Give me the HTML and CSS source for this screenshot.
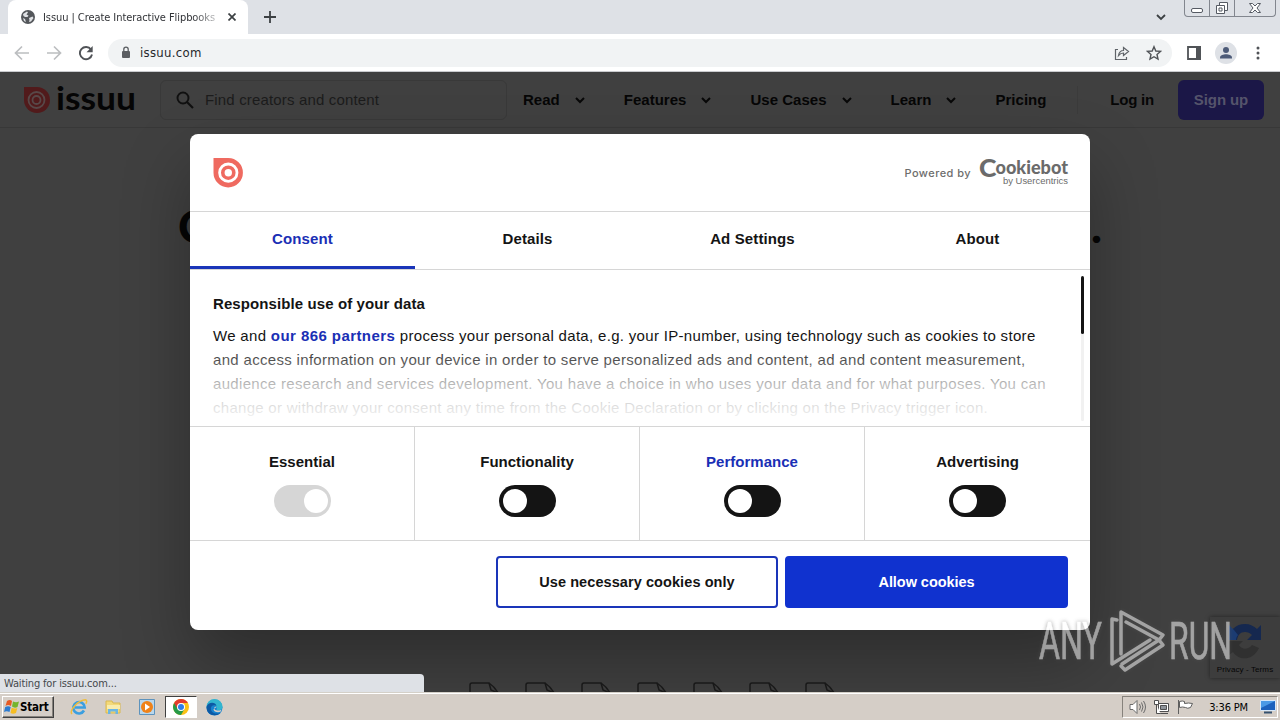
FILE: index.html
```
<!DOCTYPE html>
<html lang="en">
<head>
    <meta charset="UTF-8">
    <meta name="viewport" content="width=device-width, initial-scale=1.0">
    <title>Issuu | Create Interactive Flipbooks</title>
    <link rel="stylesheet" href="styles.css">
</head>
<body>
    <!-- browser tabs -->
    <div class="tabbar">
        <div class="tab">
            <svg width="14" height="14" viewBox="0 0 14 14"><circle cx="7" cy="7" r="7" fill="#54575b"/><path d="M2 4l4-2.500 1 1-1.500 2 2 1-1 1.500H4L2.500 6zM8 8l3.500-1.500 1 1.500-2.500 3.500-2 .5.500-2zM2 8l2 1 1 3-2-1z" fill="#dfe1e4"/></svg>
            <span class="tab-title">Issuu | Create Interactive Flipbooks</span>
            <svg width="8" height="8" viewBox="0 0 8 8"><path d="M.5.5l7 7M7.500.5l-7 7" stroke="#3c4043" stroke-width="1.700"/></svg>
        </div>
        <svg class="newtab" width="12" height="12" viewBox="0 0 12 12"><path d="M6 0v12M0 6h12" stroke="#3c4043" stroke-width="1.800"/></svg>
        <svg class="tabsearch" width="10" height="7" viewBox="0 0 10 7"><path d="M1 1l4 4 4-4" fill="none" stroke="#3c4043" stroke-width="1.800"/></svg>
        <div class="winctl">
            <span class="wc"><svg width="14" height="16"><rect x="1.500" y="8.500" width="11" height="4" rx="1.500" fill="#fff" stroke="#555a63"/></svg></span>
            <span class="wc"><svg width="14" height="16"><path d="M4.500 2.500h8v8h-8z" fill="#fff" stroke="#555a63"/><path d="M1.500 5.500h8v8h-8zM4 8h3v3H4z" fill="#fff" stroke="#555a63"/></svg></span>
            <span class="wc wide"><svg width="14" height="16"><path d="M1.500 3.500h3L7 6l2.500-2.500h3L9 8l3.500 4.500h-3L7 10l-2.500 2.500h-3L5 8z" fill="#fff" stroke="#555a63"/></svg></span>
        </div>
    </div>

    <!-- address bar -->
    <div class="toolbar">
        <svg width="16" height="16" viewBox="0 0 16 16"><path d="M15 8H2M8 1.500L1.500 8 8 14.500" fill="none" stroke="#bcbec0" stroke-width="1.700"/></svg>
        <svg width="16" height="16" viewBox="0 0 16 16"><path d="M1 8h13M8 1.500L14.500 8 8 14.500" fill="none" stroke="#bcbec0" stroke-width="1.700"/></svg>
        <svg width="16" height="16" viewBox="0 0 16 16"><path d="M13 4.600A6.100 6.100 0 1 0 14 9.500" fill="none" stroke="#505357" stroke-width="1.900"/><path d="M14.700 1v6.200H8.500z" fill="#505357"/></svg>
        <div class="omnibox">
            <svg width="10" height="13" viewBox="0 0 10 13"><rect x="1" y="5" width="8" height="7" rx="1" fill="#5b5e62"/><path d="M2.800 5.500V3.300a2.200 2.200 0 0 1 4.400 0v2.200" fill="none" stroke="#5b5e62" stroke-width="1.300"/></svg>
            <span class="url">issuu.com</span>
            <svg width="16" height="16" viewBox="0 0 16 16"><path d="M4 4.500H1.500v10h11V12" fill="none" stroke="#5f6368" stroke-width="1.200"/><path d="M4.500 10.500c.5-3 2-5 5-5V2.500l5 4-5 4V8c-2 0-3.500.7-5 2.500z" fill="none" stroke="#5f6368" stroke-width="1.200"/></svg>
            <svg width="16" height="16" viewBox="0 0 16 16"><path d="M8 1.700l1.800 4.300 4.700.4-3.500 3.100 1 4.600L8 11.700l-4 2.400 1-4.600-3.500-3.100 4.700-.4z" fill="none" stroke="#505357" stroke-width="1.400"/></svg>
        </div>
        <svg class="panel-icon" width="14" height="14" viewBox="0 0 14 14"><path d="M1 1h12v12H1z" fill="#fff" stroke="#505357" stroke-width="1.800"/><path d="M9 0h5v14H9z" fill="#505357"/></svg>
        <svg class="profile" width="22" height="22" viewBox="0 0 22 22"><circle cx="11" cy="11" r="11" fill="#dee1e6"/><circle cx="11" cy="8" r="3" fill="#4d5b78"/><path d="M5 16.500v-1c0-2 3.500-3.200 6-3.200s6 1.200 6 3.200v1z" fill="#4d5b78"/></svg>
        <svg width="4" height="14" viewBox="0 0 4 14" fill="#505357"><circle cx="2" cy="2" r="1.500"/><circle cx="2" cy="7" r="1.500"/><circle cx="2" cy="12" r="1.500"/></svg>
    </div>

    <div class="page">
        <div class="site-header">
            <svg class="brand" width="114" height="40" viewBox="0 -5 114 40">
                <path d="M1 2h13a13 13 0 1 1-13 13z" fill="#511a1b"/>
                <circle cx="13.500" cy="15" r="8" fill="none" stroke="#584848" stroke-width="1.800"/>
                <circle cx="13.500" cy="15" r="4" fill="none" stroke="#584848" stroke-width="1.800"/>
                <text x="33" y="25" textLength="80" lengthAdjust="spacingAndGlyphs">issuu</text>
            </svg>
            <div class="search">
                <svg width="18" height="18" viewBox="0 0 18 18"><circle cx="7" cy="7" r="5.500" fill="none" stroke="#101010" stroke-width="1.900"/><path d="M11 11l6 6" stroke="#101010" stroke-width="2.200"/></svg>
                <span>Find creators and content</span>
            </div>
            <div class="nav">
                <div class="nav-item">Read <svg width="10" height="7" viewBox="0 0 10 7"><path d="M1 1l4 4 4-4"/></svg></div>
                <div class="nav-item">Features <svg width="10" height="7" viewBox="0 0 10 7"><path d="M1 1l4 4 4-4"/></svg></div>
                <div class="nav-item">Use Cases <svg width="10" height="7" viewBox="0 0 10 7"><path d="M1 1l4 4 4-4"/></svg></div>
                <div class="nav-item">Learn <svg width="10" height="7" viewBox="0 0 10 7"><path d="M1 1l4 4 4-4"/></svg></div>
                <div class="nav-item">Pricing</div>
            </div>
            <div class="account">
                <span class="login">Log in</span>
                <span class="signup">Sign up</span>
            </div>
        </div>

        <div class="hero"><span>C</span><span>.</span></div>

        <div class="files">
            <svg width="31" height="10"><use href="#sheet"/></svg>
            <svg width="31" height="10"><use href="#sheet"/></svg>
            <svg width="31" height="10"><use href="#sheet"/></svg>
            <svg width="31" height="10"><use href="#sheet"/></svg>
            <svg width="31" height="10"><defs><path id="sheet" d="M1 12V3q0-2 2-2h17q6 4 9 10M20 1l2 7 7 3" fill="none" stroke="#1b1b1b" stroke-width="1.500"/></defs><use href="#sheet"/></svg>
            <svg width="31" height="10"><use href="#sheet"/></svg>
            <svg width="31" height="10"><use href="#sheet"/></svg>
        </div>

        <div class="captcha">
            <svg width="36" height="38" viewBox="0 0 36 38">
                <path d="M2 18C2 8 9 2 18 2c5 0 9 2 12 5l4-4v15H20l5-5c-2-2-4-3-7-3-5 0-7 3-8 8z" fill="#15284f"/>
                <path d="M2 18V3l5 5 4 5c-1 1-2 3-2 5z" fill="#1b3c73"/>
                <path d="M2 19h14l-4 4c3 5 9 5 13 0l7 3c-6 13-20 13-26 4l-4 3z" fill="#303030"/>
            </svg>
            <span>Privacy - Terms</span>
        </div>

        <div class="dialog">
            <div class="dialog-top">
                <svg width="32" height="32" viewBox="0 0 32 32">
                    <path d="M1.500 1h14.700a14.700 14.700 0 1 1-14.700 14.700z" fill="#ef6a60"/>
                    <circle cx="16.300" cy="15.700" r="8.700" fill="none" stroke="#fff" stroke-width="2.800"/>
                    <circle cx="16.300" cy="15.700" r="3.700" fill="#fff"/>
                </svg>
                <div class="powered">
                    <span>Powered by</span>
                    <svg width="90" height="34" viewBox="0 -2 90 34">
                        <text class="cb-c" x="0" y="19" textLength="17.500" lengthAdjust="spacingAndGlyphs">C</text>
                        <text class="cb-name" x="16.500" y="15.500" textLength="72.500" lengthAdjust="spacingAndGlyphs">ookiebot</text>
                        <text class="cb-by" x="24" y="25.500" textLength="65" lengthAdjust="spacingAndGlyphs">by Usercentrics</text>
                    </svg>
                </div>
            </div>
            <div class="tabs">
                <div class="active">Consent</div>
                <div>Details</div>
                <div>Ad Settings</div>
                <div>About</div>
            </div>
            <div class="consent">
                <h2>Responsible use of your data</h2>
                <p>We and <b>our 866 partners</b> process your personal data, e.g. your IP-number, using technology such as cookies to store<br>
                and access information on your device in order to serve personalized ads and content, ad and content measurement,<br>
                audience research and services development. You have a choice in who uses your data and for what purposes. You can<br>
                <span class="last">change or withdraw your consent any time from the Cookie Declaration or by clicking on the Privacy trigger icon.</span></p>
                <div class="fade"></div>
                <div class="scroll"><div class="thumb"></div></div>
            </div>
            <div class="options">
                <div class="option">Essential <span class="toggle on"></span></div>
                <div class="option">Functionality <span class="toggle"></span></div>
                <div class="option link">Performance <span class="toggle"></span></div>
                <div class="option">Advertising <span class="toggle"></span></div>
            </div>
            <div class="buttons">
                <div class="btn outline">Use necessary cookies only</div>
                <div class="btn filled">Allow cookies</div>
            </div>
        </div>

        <svg class="watermark" width="200" height="66" viewBox="0 0 200 66">
            <text x="2" y="50" textLength="63" lengthAdjust="spacingAndGlyphs">ANY</text>
            <g fill="none" stroke="#fff" stroke-width="3.500" stroke-linejoin="round" stroke-linecap="round">
                <path d="M80 11l-5-1v45l38-24"/>
                <path d="M84 45V3l42 23-4 5-33-18"/>
                <path d="M84 57l4 4 38-25-4-5-37 24"/>
            </g>
            <text x="132" y="50" textLength="63" lengthAdjust="spacingAndGlyphs">RUN</text>
        </svg>

        <div class="status">Waiting for issuu.com...</div>
    </div>

    <div class="taskbar">
        <div class="start">
            <svg width="16" height="16" viewBox="0 0 16 16"><path d="M3 2q3-2 5 0L7 7Q4 5 1.500 7z" fill="#e65a24"/><path d="M9 2.500q3 1.500 6 0L13.500 8q-3 1.500-5.500-.5z" fill="#74b42e"/><path d="M1.200 8q3-1.500 5.500 0L5.500 13q-3-1.500-5.500 0z" fill="#2c7bd0"/><path d="M7.700 8.700q3 1.500 5.600.2L12 14q-3 1.500-5.500 0z" fill="#f6bd22"/></svg>
            <span>Start</span>
        </div>
        <svg class="launch" width="18" height="18" viewBox="0 0 18 18"><path d="M14 12.500A5.700 5.700 0 1 1 14.700 9.500H5" fill="none" stroke="#3b9fe0" stroke-width="2.600"/><path d="M2 16C-1 13 8 2 15.500 1.800c2 .3 1 3 .3 4" fill="none" stroke="#efbd3c" stroke-width="1.500"/></svg>
        <svg class="launch" width="18" height="18" viewBox="0 0 18 18"><path d="M2 3h6l1 2h7v10H2z" fill="#f3d979" stroke="#d9b851"/><path d="M3 7h13v4H3z" fill="#f9ecac"/><path d="M4 16v-5h10v5h-2.500v-2.500h-5V16z" fill="#6bb6e3"/></svg>
        <svg class="launch" width="18" height="18" viewBox="0 0 18 18"><path d="M1.500 1.500h15v15h-15z" fill="#b9d7ec" stroke="#5d93bd"/><circle cx="9" cy="9" r="6" fill="#ef8219"/><path d="M7 5.500l5 3.500-5 3.500z" fill="#fff"/></svg>
        <div class="running">
            <svg width="16" height="16" viewBox="0 0 16 16"><circle cx="8" cy="8" r="8" fill="#fbc116"/><path d="M1.100 4A8 8 0 0 0 8 16l3.500-6z" fill="#269a48"/><path d="M8 4h6.900a8 8 0 0 0-13.800 0l3.500 6z" fill="#e33b2e"/><circle cx="8" cy="8" r="4" fill="#fff"/><circle cx="8" cy="8" r="3" fill="#2f7de9"/></svg>
        </div>
        <svg class="launch edge" width="17" height="17" viewBox="0 0 17 17"><circle cx="8.500" cy="8.500" r="8" fill="#1683d0"/><path d="M.5 8A8 8 0 0 1 16.500 8c0 3-3.500 4-6 3 1-2 0-5-3.500-5S1 7 .5 8z" fill="#32b5cf"/><path d="M.5 8c1-5 9-6 10-1-4-2-7 1-5 5 2 3 6 3 9 2-4 4-14 3-14-6z" fill="#0c59a4"/><path d="M10.500 8c-2.500-1-3.500 2.500 0 3.300 2 .5 4 0 5-.5l-1 2c-3 1-7 0-7-2.500z" fill="#d5cec7"/></svg>
        <div class="tray">
            <svg width="17" height="16" viewBox="0 0 17 16" fill="#fff" stroke="#6b6b6b"><path d="M1 5.500h3l4-4v13l-4-4H1z"/><path d="M10.500 5q2 3 0 6M12.500 3.500q3 4.500 0 9M14.500 2q4 6 0 12" fill="none"/></svg>
            <svg width="17" height="16" viewBox="0 0 17 16" fill="#fff" stroke="#4f4f4f"><path d="M5.500 4.500h10v8h-10zM7 14.500h8"/><path d="M7.500 6.500h6v4h-6z" fill="#8e9399"/><path d="M1.500 1.500h4v4h-4zM3.500 5.500v9h4"/></svg>
            <svg width="17" height="16" viewBox="0 0 17 16" fill="#fff" stroke="#5f5f5f"><path d="M1.500 1v14"/><path d="M2.500 2.500q3-1 5 0v2q4-1 8 0l-2 4q-3 1.500-5 0-3-1-6 0z"/></svg>
            <span class="clock">3:36 PM</span>
            <svg width="16" height="14" viewBox="0 0 16 14"><path d="M.5.5h15v10H.5z" fill="#1d62bd" stroke="#d8e8f8"/><path d="M1 1h14L1 8z" fill="#4b9ae6"/><path d="M4 12.500h8" stroke="#34516f" stroke-width="2"/></svg>
        </div>
    </div>
</body>
</html>
```
FILE: styles.css
```
body {
    margin: 0;
    width: 1280px;
    height: 720px;
    overflow: hidden;
    display: flex;
    flex-direction: column;
    font-family: "Liberation Sans", Arial, sans-serif;
    font-size: 15px;
}
svg {
    flex: none;
    display: block;
}
.tabbar {
    height: 34px;
    background-color: #dee1e6;
    display: flex;
    align-items: center;
    box-sizing: border-box;
    padding-left: 8px;
    font-family: "DejaVu Sans Condensed", "DejaVu Sans", sans-serif;
}
.tab {
    width: 240px;
    height: 34px;
    box-sizing: border-box;
    padding: 0 12px 0 13px;
    background-color: white;
    border-radius: 8px 8px 0 0;
    display: flex;
    align-items: center;
}
.tab-title {
    flex: 1;
    margin: 0 12px 0 8px;
    width: 175px;
    overflow: hidden;
    white-space: nowrap;
    font-size: 11px;
    letter-spacing: -0.07px;
    color: #303236;
    -webkit-mask-image: linear-gradient(to right, black 150px, transparent 182px);
}
.newtab {
    margin-left: 16px;
}
.tabsearch {
    margin-left: auto;
    margin-right: 18px;
}
.winctl {
    align-self: flex-start;
    display: flex;
    width: 92px;
    height: 17px;
    box-sizing: border-box;
    margin-right: 4px;
    border: 1px solid #82868e;
    border-top: none;
    border-radius: 0 0 4px 4px;
}
.wc {
    width: 24px;
    display: flex;
    justify-content: center;
    border-right: 1px solid #82868e;
}
.wc.wide {
    flex: 1;
    border-right: none;
}
.toolbar {
    height: 38px;
    box-sizing: border-box;
    padding: 0 20px 0 14px;
    border-bottom: 1px solid #c9cbce;
    background-color: white;
    display: flex;
    align-items: center;
    gap: 16px;
}
.omnibox {
    width: 1064px;
    height: 28px;
    box-sizing: border-box;
    margin-left: -2px;
    padding: 0 10px 0 13px;
    border-radius: 14px;
    background-color: #f1f3f4;
    display: flex;
    align-items: center;
    gap: 16px;
}
.url {
    flex: 1;
    margin-left: -7px;
    font-family: "DejaVu Sans Condensed", "DejaVu Sans", sans-serif;
    font-size: 13px;
    letter-spacing: 0.3px;
    color: #26282b;
}
.panel-icon {
    margin-left: -1px;
}
.profile {
    margin: 0 3px 0 -2px;
}
.page {
    position: relative;
    height: 620px;
    background-color: #404040;
    overflow: hidden;
}
.site-header {
    height: 56px;
    box-sizing: border-box;
    border-bottom: 1px solid #383838;
    padding: 0 16px 0 23px;
    display: flex;
    align-items: center;
    color: #060606;
    font-weight: bold;
    white-space: nowrap;
}
.brand text {
    font-family: Lato, sans-serif;
    font-size: 33px;
    font-weight: bold;
    fill: #050505;
}
.search {
    width: 347px;
    height: 40px;
    box-sizing: border-box;
    margin-left: 23px;
    padding-left: 15px;
    border: 1px solid #393939;
    border-radius: 6px;
    display: flex;
    align-items: center;
    gap: 11px;
    color: #1c1c1c;
    font-weight: normal;
    letter-spacing: 0.16px;
}
.nav {
    margin-left: 16px;
    display: flex;
    gap: 39px;
    letter-spacing: 0.02px;
}
.nav-item {
    display: flex;
    align-items: center;
    gap: 15px;
}
.nav-item svg {
    margin-top: 2px;
}
.nav-item path {
    fill: none;
    stroke: #080808;
    stroke-width: 2;
}
.account {
    margin-left: auto;
    height: 28px;
    padding-left: 32px;
    border-left: 1px solid #3b3b3b;
    display: flex;
    align-items: center;
    gap: 24px;
    letter-spacing: -0.2px;
}
.signup {
    width: 86px;
    height: 40px;
    border-radius: 6px;
    background-color: #1b1747;
    color: #55546b;
    line-height: 40px;
    text-align: center;
    letter-spacing: -0.1px;
}
.hero {
    width: 924px;
    margin: 69px auto 0;
    display: flex;
    justify-content: space-between;
    font-family: Lato, sans-serif;
    font-size: 46px;
    font-weight: 900;
    line-height: 58px;
    color: #050505;
}
.files {
    position: absolute;
    left: 469px;
    bottom: 0;
    display: flex;
    gap: 25px;
}
.captcha {
    position: absolute;
    left: 1210px;
    top: 545px;
    width: 70px;
    height: 61px;
    background-color: #3d3d3d;
    box-shadow: 0 0 4px #222;
    display: flex;
    flex-direction: column;
    align-items: center;
    gap: 5px;
    padding-top: 5px;
    box-sizing: border-box;
    font-size: 8px;
    line-height: 10px;
    letter-spacing: 0.1px;
    color: #050505;
}
.dialog {
    position: absolute;
    left: 190px;
    top: 62px;
    width: 900px;
    height: 496px;
    border-radius: 8px;
    background-color: white;
    box-shadow: 0 32px 68px rgba(0, 0, 0, 0.3);
    color: #141414;
}
.dialog-top {
    height: 77px;
    padding: 0 21px 0 22px;
    border-bottom: 1px solid #d6d6d6;
    display: flex;
    align-items: center;
    justify-content: space-between;
}
.powered {
    display: flex;
    align-items: center;
    gap: 8px;
    font-family: Inter, sans-serif;
    font-size: 11px;
    font-weight: 500;
    letter-spacing: 0.45px;
    color: #6d6d6d;
}
.powered text {
    fill: #6b6b6b;
    letter-spacing: 0;
}
.cb-c {
    font-family: Lato, sans-serif;
    font-size: 25px;
    font-weight: 900;
}
.cb-name {
    font-family: Lato, sans-serif;
    font-size: 18.5px;
    font-weight: 900;
}
.cb-by {
    font-family: "Liberation Sans", Arial, sans-serif;
    font-size: 9.5px;
    font-weight: normal;
}
.tabs {
    height: 57px;
    border-bottom: 1px solid #d6d6d6;
    display: flex;
    font-weight: bold;
    letter-spacing: 0.12px;
    line-height: 53px;
    text-align: center;
}
.tabs div {
    flex: 1;
    height: 54px;
}
.tabs .active {
    color: #1a2fb5;
    border-bottom: 3px solid #1a35b9;
}
.consent {
    position: relative;
    height: 156px;
    padding: 0 23px;
    border-bottom: 1px solid #d6d6d6;
    overflow: hidden;
}
.consent h2 {
    margin: 22px 0 8px;
    font-size: 15px;
    line-height: 24px;
    letter-spacing: 0.1px;
}
.consent p {
    margin: 0;
    line-height: 24px;
    letter-spacing: 0.32px;
    white-space: nowrap;
}
.consent .last {
    letter-spacing: 0.28px;
}
.consent b {
    color: #1a2fb5;
    letter-spacing: 0.43px;
}
.fade {
    position: absolute;
    left: 0;
    right: 20px;
    bottom: 0;
    height: 84px;
    background: linear-gradient(to bottom, rgba(255, 255, 255, 0), rgba(255, 255, 255, 0.3) 25%, rgba(255, 255, 255, 0.7) 50%, rgba(255, 255, 255, 0.87) 78%, white);
}
.scroll {
    position: absolute;
    right: 6px;
    top: 6px;
    width: 3px;
    height: 145px;
    border-radius: 2px;
    background-color: #f1f1f1;
}
.thumb {
    height: 58px;
    border-radius: 2px;
    background-color: #141414;
}
.options {
    height: 113px;
    border-bottom: 1px solid #d6d6d6;
    display: flex;
    font-weight: bold;
}
.option {
    width: 225px;
    box-sizing: border-box;
    padding-top: 23px;
    border-right: 1px solid #d6d6d6;
    display: flex;
    flex-direction: column;
    align-items: center;
    gap: 11px;
    line-height: 24px;
    letter-spacing: 0.02px;
}
.option:last-child {
    border-right: none;
}
.option.link {
    color: #1a2fb5;
}
.toggle {
    width: 57px;
    height: 32px;
    box-sizing: border-box;
    padding: 4px;
    border-radius: 16px;
    background-color: #141414;
}
.toggle::before {
    content: "";
    display: block;
    width: 24px;
    height: 24px;
    border-radius: 50%;
    background-color: white;
}
.toggle.on {
    background-color: #d6d6d6;
    padding-left: 30px;
}
.buttons {
    padding: 15px 22px 0 0;
    display: flex;
    justify-content: flex-end;
    gap: 7px;
    font-weight: bold;
    font-size: 14.5px;
    letter-spacing: 0.08px;
    text-align: center;
}
.btn {
    width: 279px;
    height: 48px;
    line-height: 48px;
    border: 2px solid #1a35b9;
    border-radius: 4px;
}
.btn.outline {
    width: 278px;
}
.btn.filled {
    background-color: #1032cf;
    border-color: #1032cf;
    color: white;
    letter-spacing: -0.05px;
}
.watermark {
    position: absolute;
    left: 1037px;
    top: 537px;
    opacity: 0.52;
    filter: drop-shadow(0 0 2px #555);
}
.watermark text {
    font-family: Roboto, sans-serif;
    font-size: 52px;
    fill: white;
    stroke: white;
    stroke-width: 0.6;
}
.status {
    position: absolute;
    left: 0;
    bottom: 0;
    width: 424px;
    height: 18px;
    box-sizing: border-box;
    padding-left: 4px;
    border-radius: 0 4px 0 0;
    background-color: #dee1e6;
    font-family: "DejaVu Sans Condensed", "DejaVu Sans", sans-serif;
    font-size: 11px;
    letter-spacing: -0.15px;
    line-height: 19px;
    color: #45484c;
}
.taskbar {
    height: 28px;
    box-sizing: border-box;
    border-top: 1px solid #d4d0c8;
    box-shadow: inset 0 1px white;
    padding: 1px 2px 0 2px;
    background-color: #d5cec7;
    display: flex;
    align-items: center;
    font-family: "DejaVu Sans Condensed", "DejaVu Sans", sans-serif;
}
.start {
    width: 52px;
    height: 22px;
    box-sizing: border-box;
    padding-left: 1px;
    border: 1px solid;
    border-color: white #404040 #404040 white;
    box-shadow: inset -1px -1px #86827c;
    display: flex;
    align-items: center;
    font-size: 11.5px;
    font-weight: bold;
    letter-spacing: -0.2px;
    color: black;
}
.launch {
    margin-left: 16px;
}
.running {
    width: 32px;
    height: 22px;
    box-sizing: border-box;
    margin-left: 9px;
    border: 1px solid;
    border-color: #404040 white white #404040;
    background-color: white;
    display: flex;
    align-items: center;
    justify-content: center;
}
.launch.edge {
    margin-left: 9px;
}
.tray {
    width: 156px;
    height: 22px;
    box-sizing: border-box;
    margin-left: auto;
    padding: 0 1px 0 6px;
    border: 1px solid;
    border-color: #86827c white white #86827c;
    display: flex;
    align-items: center;
    gap: 7px;
}
.clock {
    flex: 1;
    text-align: right;
    margin-right: 5px;
    font-size: 11px;
    letter-spacing: -0.15px;
    white-space: nowrap;
}
```
